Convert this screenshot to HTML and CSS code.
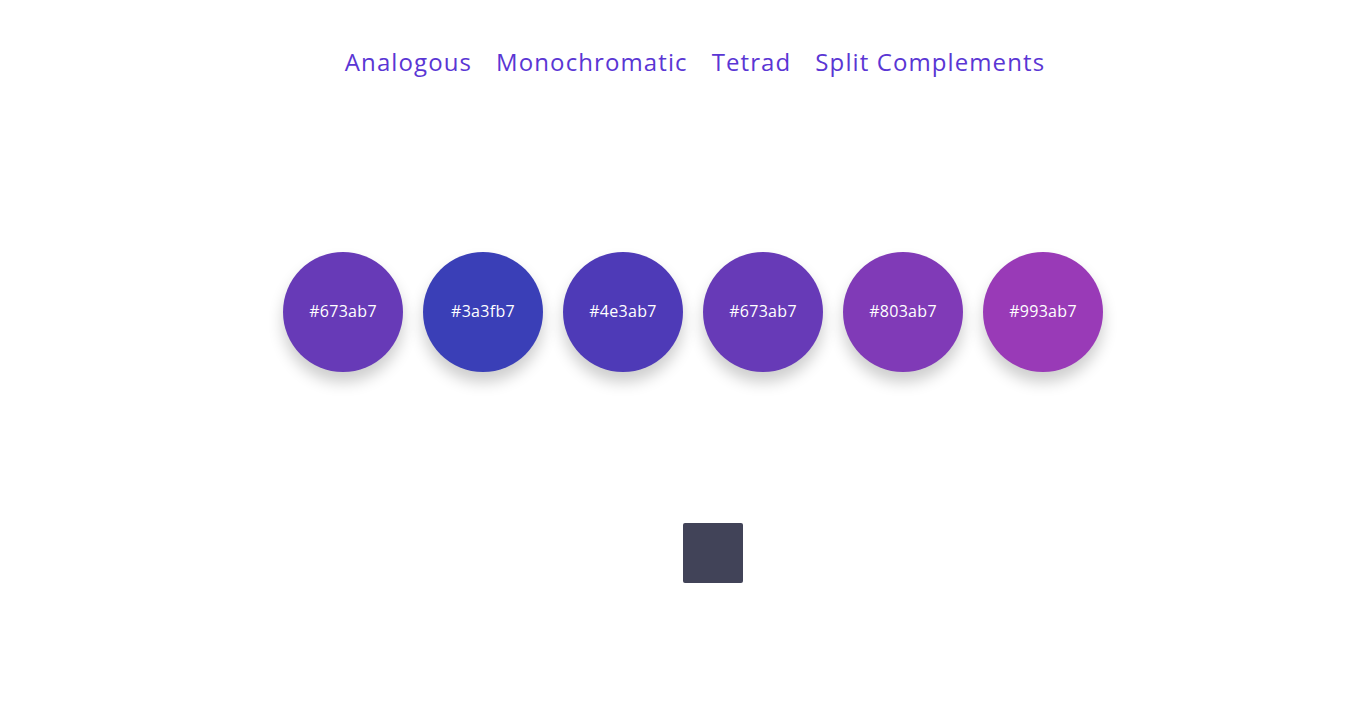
FILE: index.html
```html
<!DOCTYPE html>
<html lang="en">
<head>
    <meta charset="UTF-8">
    <meta name="viewport" content="width=device-width, initial-scale=1.0">
    <title>Color Schemes</title>
    <link rel="stylesheet" href="styles.css">
</head>
<body>
    <nav class="schemes">
        <a href="#" class="scheme">Analogous</a>
        <a href="#" class="scheme">Monochromatic</a>
        <a href="#" class="scheme">Tetrad</a>
        <a href="#" class="scheme">Split Complements</a>
    </nav>

    <!-- Palette -->
    <div class="palette">
        <div class="swatch" style="background: #673ab7;">#673ab7</div>
        <div class="swatch" style="background: #3a3fb7;">#3a3fb7</div>
        <div class="swatch" style="background: #4e3ab7;">#4e3ab7</div>
        <div class="swatch" style="background: #673ab7;">#673ab7</div>
        <div class="swatch" style="background: #803ab7;">#803ab7</div>
        <div class="swatch" style="background: #993ab7;">#993ab7</div>
    </div>

    <div class="picker-row">
        <div class="picker"></div>
    </div>
</body>
</html>
```

FILE: styles.css
```css
* {
    margin: 0;
    padding: 0;
    box-sizing: border-box;
    font-family: "Open Sans", sans-serif;
}

body {
    background: #fff;
}

.schemes {
    display: flex;
    justify-content: center;
    gap: 24px;
    padding: 44px 0 0 24px;
    height: 90px;
}

.scheme {
    color: #5a36d4;
    font-size: 24px;
    font-weight: 400;
    letter-spacing: 1.1px;
    text-decoration: none;
    line-height: 36px;
}

.palette {
    display: flex;
    justify-content: center;
    gap: 20px;
    padding: 162px 0 0 20px;
}

.swatch {
    width: 120px;
    height: 120px;
    border-radius: 50%;
    display: flex;
    justify-content: center;
    align-items: center;
    color: #fff;
    font-size: 16px;
    letter-spacing: 0.3px;
    padding-bottom: 2px;
    box-shadow: 0 10px 15px rgba(0, 0, 0, 0.2);
}

.picker-row {
    padding: 151px 0 0 683px;
}

.picker {
    width: 60px;
    height: 60px;
    background: #414358;
    border-radius: 2px;
}
```
